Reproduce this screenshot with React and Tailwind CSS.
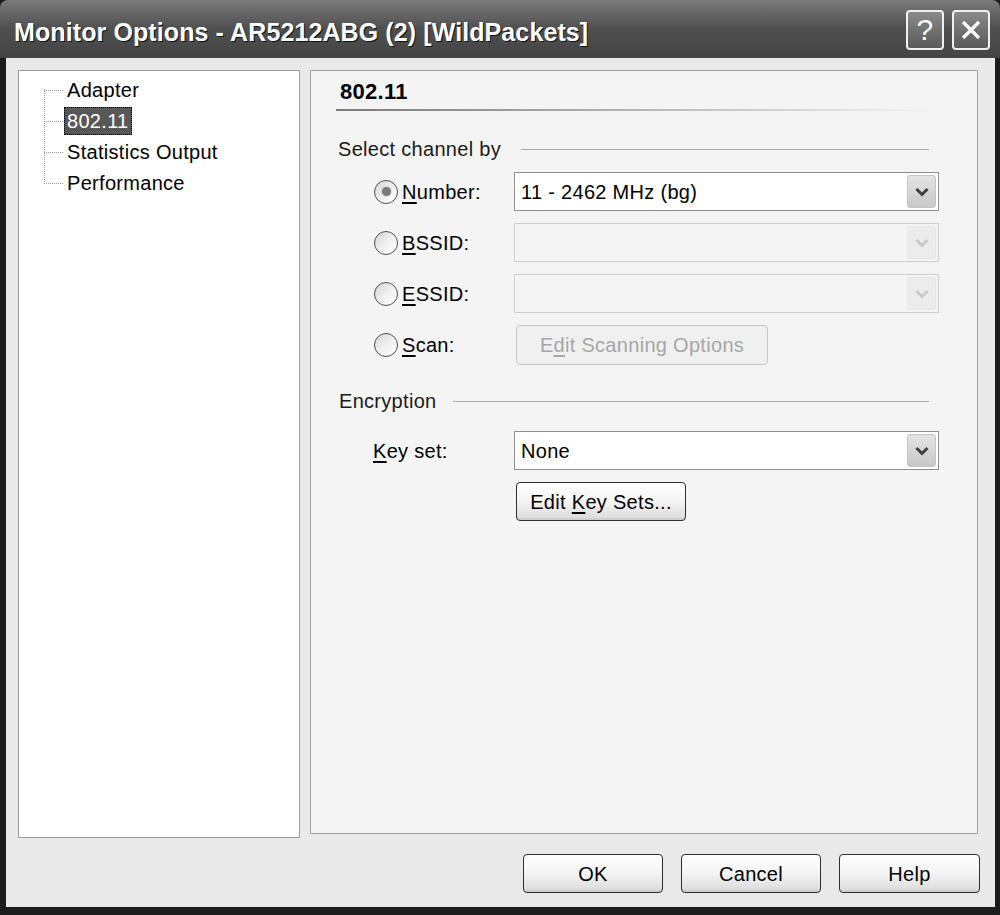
import React from 'react';

const font = { fontFamily: '"Liberation Sans", Arial, sans-serif' };

function U({ children }) {
  return <span className="underline underline-offset-[3px]">{children}</span>;
}

function Radio({ checked }) {
  return (
    <span className="flex h-[24px] w-[24px] shrink-0 items-center justify-center rounded-full border-[1.5px] border-[#4f4f4f] bg-gradient-to-br from-[#d4d4d4] via-[#f0f0f0] to-white">
      {checked && <span className="h-[9px] w-[9px] rounded-full bg-[#7a7a7a] shadow-[0_0_2px_#aaa]" />}
    </span>
  );
}

function Chevron({ disabled }) {
  return (
    <span
      className={
        'flex h-[33px] w-[29px] items-center justify-center rounded-[3px] border ' +
        (disabled
          ? 'border-[#e6e6e6] bg-[#ececec]'
          : 'border-[#c4c4c4] bg-gradient-to-b from-[#e4e4e4] to-[#c8c8c8]')
      }
    >
      <svg width="14" height="10" viewBox="0 0 14 10">
        <path
          d="M1.5 2 L7 7.5 L12.5 2"
          fill="none"
          stroke={disabled ? '#c8c8c8' : '#3f3f3f'}
          strokeWidth="3"
        />
      </svg>
    </span>
  );
}

function Combo({ value, disabled }) {
  return (
    <div
      className={
        'flex h-[39px] w-[425px] items-center justify-between border-[1.5px] pl-[6px] pr-[2px] ' +
        (disabled ? 'border-[#cfcfcf] bg-[#f4f4f4]' : 'border-[#8f8f8f] bg-white')
      }
    >
      <span className="text-[20px] text-black">{value}</span>
      <Chevron disabled={disabled} />
    </div>
  );
}

function GroupLabel({ text, lineStart }) {
  return (
    <div className="flex items-center">
      <span className="text-[20px] text-[#1a1a1a]">{text}</span>
      <span className="ml-auto h-px bg-[#a8a8a8]" style={{ width: 928 - lineStart }} />
    </div>
  );
}

function TreeItem({ label, selected }) {
  return (
    <div className="relative flex h-[31px] items-center">
      <span className="absolute left-0 top-1/2 w-[19px] border-t border-dotted border-[#9a9a9a]" />
      <span
        className={
          'ml-[20px] px-[2px] text-[20px] leading-[26px] ' +
          (selected ? 'border border-dotted border-black bg-[#575757] text-white' : 'border border-transparent text-black')
        }
      >
        {label}
      </span>
    </div>
  );
}

function Btn({ children, w }) {
  return (
    <button
      className="flex h-[39px] items-center justify-center rounded-[4px] border-[1.5px] border-[#2e2e2e] bg-gradient-to-b from-white via-[#f4f4f4] to-[#dadada] text-[20px] text-black shadow-[inset_0_-2px_0_#cfcfcf]"
      style={{ width: w }}
    >
      <span>{children}</span>
    </button>
  );
}

function TitleBtn({ children }) {
  return (
    <div className="flex h-[40px] w-[38px] items-center justify-center rounded-[4px] border-[2px] border-[#f0f0f0] bg-gradient-to-b from-[#8a8a8a] to-[#5a5a5a] text-white">
      {children}
    </div>
  );
}

export default function App() {
  return (
    <div className="flex h-[915px] w-[1000px] flex-col bg-[#1c1c1c] tracking-[0.3px]" style={font}>
      {/* title bar */}
      <div className="flex h-[58px] items-center rounded-t-[8px] bg-gradient-to-b from-[#7a7a7a] via-[#4f4f4f] to-[#444] pl-[14px] pr-[10px]">
        <span
          className="pt-[8px] text-[25px] font-bold tracking-[0.1px] text-white"
          style={{ textShadow: '1px 1px 0 #111' }}
        >
          Monitor Options - AR5212ABG (2) [WildPackets]
        </span>
        <div className="ml-auto flex gap-[8px] pt-[2px]">
          <TitleBtn>
            <span className="text-[30px] leading-none">?</span>
          </TitleBtn>
          <TitleBtn>
            <svg width="22" height="22" viewBox="0 0 22 22">
              <path d="M3 3 L19 19 M19 3 L3 19" stroke="white" strokeWidth="3.2" />
            </svg>
          </TitleBtn>
        </div>
      </div>

      {/* body */}
      <div className="mb-[8px] ml-[6px] mr-[5px] flex flex-1 flex-col bg-[#e9e9e9] pl-[12px] pr-[15px] pt-[12px]">
        <div className="flex gap-[10px]">
          {/* tree */}
          <div className="h-[768px] w-[282px] border-[1.5px] border-[#9a9a9a] bg-white pl-[25px] pt-[3px]">
            <div className="relative">
              <span className="absolute left-0 top-[15px] h-[93px] border-l border-dotted border-[#9a9a9a]" />
              <TreeItem label="Adapter" />
              <TreeItem label="802.11" selected />
              <TreeItem label="Statistics Output" />
              <TreeItem label="Performance" />
            </div>
          </div>

          {/* page */}
          <div className="h-[764px] w-[668px] border-[1.5px] border-[#a0a0a0] bg-[#f4f4f4] pl-[25px] pt-[4px]">
            <div className="pl-[4px] text-[22px] font-bold leading-[34px] text-black">802.11</div>
            <div className="h-[2px] w-[600px] bg-gradient-to-r from-[#7a7a7a] via-[#b5b5b5] to-transparent" />

            <div className="mt-[23px] w-[593px] pl-[2px]">
              <GroupLabel text="Select channel by" lineStart={520} />
            </div>

            <div className="ml-[38px] mt-[8px] flex flex-col gap-[12px]">
              <div className="flex items-center">
                <div className="flex w-[140px] items-center gap-[4px] text-[20px]">
                  <Radio checked />
                  <span><U>N</U>umber:</span>
                </div>
                <Combo value="11 - 2462 MHz (bg)" />
              </div>
              <div className="flex items-center">
                <div className="flex w-[140px] items-center gap-[4px] text-[20px]">
                  <Radio />
                  <span><U>B</U>SSID:</span>
                </div>
                <Combo value="" disabled />
              </div>
              <div className="flex items-center">
                <div className="flex w-[140px] items-center gap-[4px] text-[20px]">
                  <Radio />
                  <span><U>E</U>SSID:</span>
                </div>
                <Combo value="" disabled />
              </div>
              <div className="flex items-center">
                <div className="flex w-[140px] items-center gap-[4px] text-[20px]">
                  <Radio />
                  <span><U>S</U>can:</span>
                </div>
                <button className="ml-[2px] flex h-[40px] w-[252px] items-center justify-center rounded-[4px] border-[1.5px] border-[#c6c6c6] bg-[#f0f0f0] text-[20px] text-[#a6a6a6]">
                  <span>E<U>d</U>it Scanning Options</span>
                </button>
              </div>
            </div>

            <div className="mt-[21px] w-[593px] pl-[3px]">
              <GroupLabel text="Encryption" lineStart={452} />
            </div>

            <div className="ml-[37px] mt-[15px] flex items-center">
              <div className="w-[141px] text-[20px]">
                <U>K</U>ey set:
              </div>
              <Combo value="None" />
            </div>
            <div className="ml-[180px] mt-[12px]">
              <Btn w={170}>
                Edit <U>K</U>ey Sets...
              </Btn>
            </div>
          </div>
        </div>

        {/* footer buttons */}
        <div className="mt-[16px] flex justify-end gap-[18px]">
          <Btn w={140}>OK</Btn>
          <Btn w={140}>Cancel</Btn>
          <Btn w={141}>Help</Btn>
        </div>
      </div>
    </div>
  );
}
